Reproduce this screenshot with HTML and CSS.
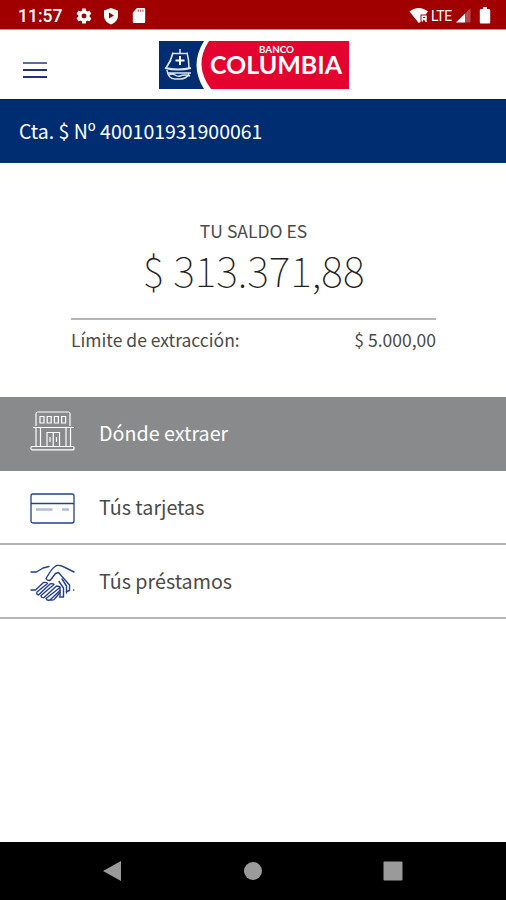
FILE: index.html
```
<!DOCTYPE html>
<html lang="es">
<head>
    <meta charset="UTF-8">
    <meta name="viewport" content="width=device-width, initial-scale=1.0">
    <title>Banco Columbia</title>
    <link rel="stylesheet" href="styles.css">
</head>
<body>
    <div class="statusbar">
        <span class="clock">11:57</span>
        <svg class="gear" width="18" height="18" viewBox="0 0 24 24"><path fill="#fff" fill-rule="evenodd" d="M19.400 13a7.500 7.500 0 0 0 0-2l2.100-1.700c.2-.1.200-.4.100-.6l-2-3.500c-.1-.2-.4-.3-.6-.2l-2.500 1a7.300 7.300 0 0 0-1.700-1l-.4-2.600A.5.500 0 0 0 14 2h-4c-.2 0-.5.200-.5.400L9.100 5c-.6.300-1.200.6-1.700 1l-2.500-1c-.2-.1-.5 0-.6.200l-2 3.500c-.1.200-.1.500.1.600L4.500 11a7.500 7.500 0 0 0 0 2l-2.100 1.700c-.2.100-.2.400-.1.600l2 3.500c.1.200.4.300.6.200l2.500-1c.5.400 1.100.7 1.700 1l.4 2.600c0 .2.300.4.500.4h4c.2 0 .5-.2.500-.4l.4-2.600c.6-.3 1.200-.6 1.700-1l2.500 1c.2.100.5 0 .6-.2l2-3.500c.1-.2.100-.5-.1-.6zM12 15.300a3.300 3.300 0 1 1 0-6.600 3.300 3.300 0 0 1 0 6.600z"/></svg>
        <svg class="shield" width="16" height="18" viewBox="0 0 16 18"><path fill="#fff" fill-rule="evenodd" d="M8 1l7 2.500v5.300c0 4-2.800 7-7 8.600-4.200-1.600-7-4.600-7-8.600V3.500zM6 5.600v6l5-3z"/></svg>
        <svg class="sdcard" width="14" height="17" viewBox="0 0 14 17"><path fill="#fff" d="M5 1h7a1.200 1.200 0 0 1 1.200 1.200v12.600A1.200 1.200 0 0 1 12 16H2a1.200 1.200 0 0 1-1.200-1.200V5.500z"/><path stroke="#c25a5a" stroke-width="1.200" d="M6.300 2.500v2.300M8.600 2.500v2.300M10.900 2.500v2.300"/></svg>
        <div class="signals">
            <svg width="20" height="17" viewBox="0 0 20 17"><path fill="#fff" d="M.5 4.500C6-.2 13.500-.2 19 4.500L16.600 7.500H11.500V15l-1.700 1z"/><path fill="none" stroke="#fff" stroke-width="1.600" d="M13.300 14.500V9.300H17v2.600h-3.700M15.500 12l2 2.800"/></svg>
            <span class="lte">LTE</span>
            <svg class="bars" width="16" height="15" viewBox="0 0 16 15"><path fill="#b94a4a" d="M14.500 0v14.500H9V5.500z"/><path fill="#fff" d="M9 5.500v9H0z"/></svg>
            <svg class="battery" width="12" height="17" viewBox="0 0 12 17"><path fill="#fff" d="M4 0h4v2h2a1.200 1.200 0 0 1 1.200 1.200v12A1.200 1.200 0 0 1 10 16.500H2a1.200 1.200 0 0 1-1.200-1.300v-12A1.200 1.200 0 0 1 2 2h2z"/></svg>
        </div>
    </div>

    <div class="header">
        <div class="burger">
            <span></span>
            <span></span>
            <span></span>
        </div>
        <svg class="logo" width="190" height="48" viewBox="0 0 190 48">
            <rect width="190" height="48" fill="#e4032e"/>
            <path fill="#fff" d="M0 0h50Q34 24 52 48H0z"/>
            <path fill="#002d72" d="M0 0h45Q30 24 45 48H0z"/>
            <g fill="none" stroke="#dfe6f3" stroke-width="1.500">
                <path d="M21 8v4M14 12.500h15M14 11.500Q12 20 7 27M28 11.500Q30 19 30 27M7 27l5-8"/>
                <path stroke="#fff" stroke-width="2" d="M21 15v9M16.500 19.500h9"/>
                <path stroke-width="2" d="M6 27q13 3 26 0"/>
                <path d="M8 29q1 9 8 9h5q6 0 9-5M8 32h24M10 34q3-2 6 0t5 1 5-1 5 1"/>
            </g>
            <text class="logo-small" x="100" y="12" textLength="35" lengthAdjust="spacingAndGlyphs">BANCO</text>
            <text class="logo-big" x="51" y="33" textLength="132" lengthAdjust="spacingAndGlyphs">COLUMBIA</text>
        </svg>
    </div>

    <div class="account">Cta. $ Nº 400101931900061</div>

    <div class="balance">
        <div class="balance-label">TU SALDO ES</div>
        <div class="balance-amount">$ 313.371,88</div>
        <div class="limit">
            <span>Límite de extracción:</span>
            <span>$ 5.000,00</span>
        </div>
    </div>

    <div class="menu">
        <div class="menu-item active">
            <svg width="46" height="42" viewBox="0 0 46 42" fill="none" stroke="#fff" stroke-width="1.200">
                <path d="M7 16V3.500Q7 2 8.500 2h31Q41 2 41 3.500V16M4 17.500h41M7 18v18M11.500 18v18M37 18v18M41.500 18v18"/>
                <path d="M11 6.500h4V13h-4zM18.200 6.500h4V13h-4zM25.400 6.500h4V13h-4zM32.600 6.500h4V13h-4z"/>
                <path d="M18 36V22.500h12.500V36M24.200 22.500V36M21 27v5M27.500 27v5"/>
                <rect x="2" y="36.500" width="43" height="3.300" rx="1"/>
            </svg>
            <span>Dónde extraer</span>
        </div>
        <div class="menu-item">
            <svg width="46" height="42" viewBox="0 0 46 42" fill="none" stroke="#24408c" stroke-width="1.300">
                <rect x="2" y="8" width="43" height="29" rx="2"/>
                <path d="M2 17.500h43"/>
                <path stroke="#b3bad6" stroke-width="2.500" d="M7 23.500h16.500M33 23.500h7"/>
            </svg>
            <span>Tús tarjetas</span>
        </div>
        <div class="menu-item">
            <svg width="46" height="42" viewBox="0 0 46 42" fill="none" stroke="#24408c" stroke-width="1.400" stroke-linejoin="round" stroke-linecap="round">
                <path d="M2 12h5.500L14 8l6-1.500M45 12l-6-3-7-3.300q-4-1-6 .8-3 2-5 5.500l-4 6.500q1.500 3 4.500 1.500l5-6.500 3-1 11 12.500v5.500l-3 1"/>
                <path d="M2 30h4.500l8-7.500q3-.5 4 1L8 32q-1 2.500 1.500 3L21 24q3-1 4 .5L12 35.500q0 2.500 3 2L27.500 26q3 0 3.500 1.500L17 38.500q1 2.500 4 1.500L31 30.500M22 40q3 .5 4-1.500l5-6"/>
                <path d="M30 21.500l4.500 6.500v9h-4M33 19l4.500 7v7M31 27.500v8M44.500 30h.3"/>
            </svg>
            <span>Tús préstamos</span>
        </div>
    </div>

    <div class="navbar">
        <svg width="20" height="22" viewBox="0 0 20 22"><path fill="#9a9a9a" d="M19 1v20L1 11z"/></svg>
        <svg width="20" height="20" viewBox="0 0 20 20"><circle cx="10" cy="10" r="9" fill="#9a9a9a"/></svg>
        <svg width="20" height="20" viewBox="0 0 20 20"><rect x=".5" y=".5" width="19" height="19" rx="1" fill="#9a9a9a"/></svg>
    </div>
</body>
</html>
```
FILE: styles.css
```
* {
    box-sizing: border-box;
}
body {
    font-family: "Noto Sans CJK SC", "Noto Sans", sans-serif;
    background-color: white;
    color: #4a4a4a;
    margin: 0;
    height: 900px;
    display: flex;
    flex-direction: column;
    white-space: nowrap;
}
svg {
    display: block;
    flex: none;
}
.statusbar {
    height: 30px;
    background-color: #a00000;
    border-bottom: 1px solid #c98a8a;
    color: white;
    display: flex;
    align-items: center;
    padding: 2px 15px 0 18px;
    font-family: Roboto, sans-serif;
}
.clock {
    width: 45px;
    font-size: 17.5px;
    font-weight: 500;
}
.gear {
    margin-left: 12px;
}
.shield {
    margin-left: 10px;
}
.sdcard {
    margin-left: 13px;
}
.signals {
    margin-left: auto;
    display: flex;
    align-items: center;
}
.lte {
    width: 23px;
    margin-left: 2px;
    font-size: 14px;
    letter-spacing: -0.4px;
}
.bars {
    margin-left: 2px;
}
.battery {
    margin-left: 7px;
}
.header {
    height: 69px;
    display: flex;
    padding: 11px 0 0 23px;
}
.burger {
    width: 24px;
    margin: 21px 112px 0 0;
    display: flex;
    flex-direction: column;
    gap: 5px;
}
.burger span {
    height: 2px;
    background-color: #24307c;
}
.burger span:first-child {
    background-color: #5a6c9c;
}
.logo-small,
.logo-big {
    font-family: Lato, sans-serif;
    font-weight: 700;
    fill: white;
}
.logo-small {
    font-size: 10px;
}
.logo-big {
    font-size: 25px;
}
.account {
    height: 64px;
    background-color: #002d72;
    border-top: 1px solid #001a55;
    color: white;
    padding-left: 19px;
    font-size: 19.5px;
    line-height: 61px;
}
.balance {
    height: 234px;
    padding: 55px 70px 0 71px;
}
.balance-label {
    text-align: center;
    font-size: 17.5px;
    line-height: 26px;
}
.balance-amount {
    text-align: center;
    color: #222;
    font-size: 41.3px;
    font-weight: 100;
    line-height: 50px;
}
.limit {
    display: flex;
    justify-content: space-between;
    margin-top: 24px;
    padding-top: 7px;
    border-top: 2px solid #b5b5b5;
    font-size: 17.5px;
    line-height: 26px;
}
.menu-item {
    height: 74px;
    display: flex;
    align-items: center;
    padding-left: 29px;
    gap: 24px;
    border-bottom: 2px solid #b5b5b5;
    font-size: 19.7px;
}
.menu-item span {
    padding-bottom: 2px;
}
.menu-item.active {
    background-color: #888a8b;
    border-bottom-color: #888a8b;
    color: white;
}
.menu-item.active svg {
    margin-bottom: 4px;
}
.navbar {
    height: 58px;
    margin-top: auto;
    background-color: black;
    display: flex;
    align-items: center;
    justify-content: space-between;
    padding: 0 103px 0 102px;
}
```
